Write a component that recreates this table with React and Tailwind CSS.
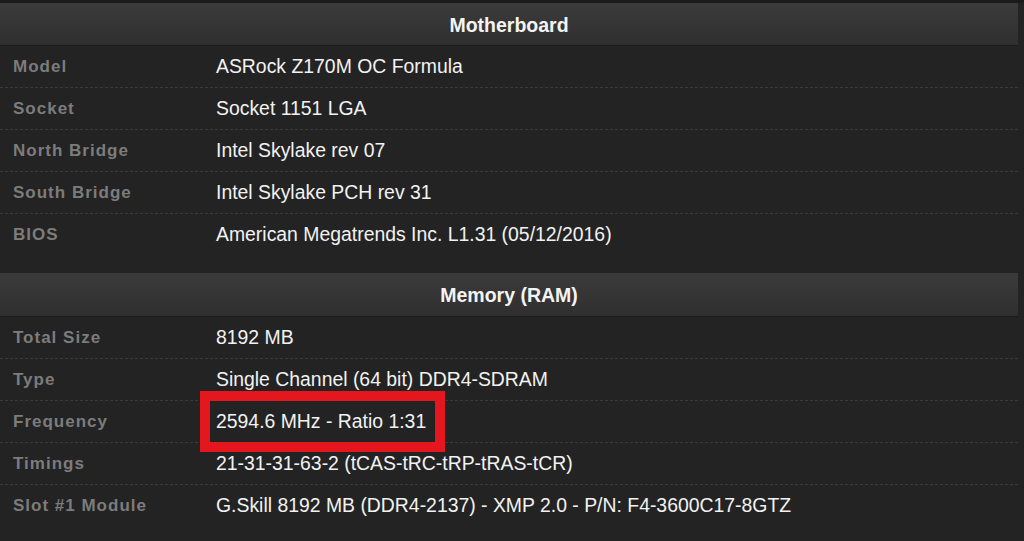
import React from "react";

const mobo = [
  ["Model", "ASRock Z170M OC Formula"],
  ["Socket", "Socket 1151 LGA"],
  ["North Bridge", "Intel Skylake rev 07"],
  ["South Bridge", "Intel Skylake PCH rev 31"],
  ["BIOS", "American Megatrends Inc. L1.31 (05/12/2016)"],
];

const mem = [
  ["Total Size", "8192 MB"],
  ["Type", "Single Channel (64 bit) DDR4-SDRAM"],
  ["Frequency", "2594.6 MHz - Ratio 1:31", true],
  ["Timings", "21-31-31-63-2 (tCAS-tRC-tRP-tRAS-tCR)"],
  ["Slot #1 Module", "G.Skill 8192 MB (DDR4-2137) - XMP 2.0 - P/N: F4-3600C17-8GTZ"],
];

function Header({ title, h }) {
  return (
    <div
      className={`${h} flex items-center justify-center pt-[3px] bg-gradient-to-b from-[#3b3b3b] to-[#2f2f2f] border-b border-[#1c1c1c] text-[19.5px] font-bold text-[#f4f4f4]`}
    >
      {title}
    </div>
  );
}

function Row({ label, value, mark, last }) {
  return (
    <div
      className={`h-[42px] flex items-center ${
        last ? "" : "border-b border-dashed border-[#3a3a3a]"
      }`}
    >
      <div className="w-[216px] shrink-0 pl-[13px] text-[17px] font-bold tracking-[1px] text-[#7c7c7c]">
        {label}
      </div>
      <div className="relative text-[19.4px] text-[#f2f2f2] whitespace-nowrap">
        {value}
        {mark && (
          <div className="absolute left-[-16px] right-[-19px] top-[-16px] bottom-[-16px] border-[10px] border-[#e4171e]" />
        )}
      </div>
    </div>
  );
}

export default function App() {
  return (
    <div
      className="w-[1024px] h-[541px] overflow-hidden bg-[#232323] border-t-[3px] border-[#1b1b1b]"
      style={{ fontFamily: '"Liberation Sans", Arial, sans-serif' }}
    >
      <div className="w-[1018px]">
        <Header title="Motherboard" h="h-[43px]" />
        {mobo.map((r, i) => (
          <Row key={r[0]} label={r[0]} value={r[1]} last={i === mobo.length - 1} />
        ))}
        <div className="h-[17px]" />
        <Header title="Memory (RAM)" h="h-[44px]" />
        {mem.map((r, i) => (
          <Row key={r[0]} label={r[0]} value={r[1]} mark={r[2]} last={i === mem.length - 1} />
        ))}
      </div>
    </div>
  );
}
